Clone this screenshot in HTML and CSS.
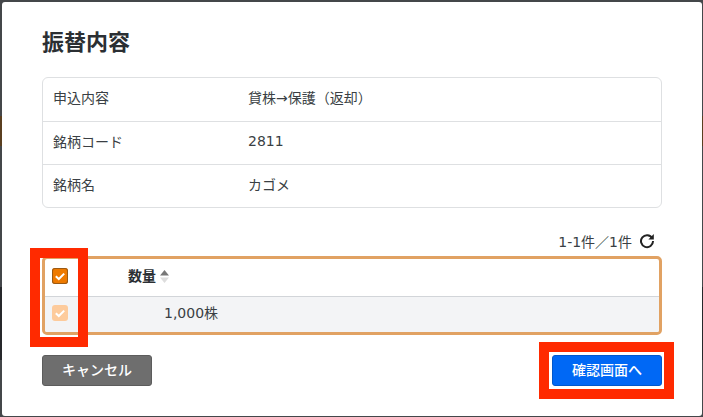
FILE: index.html
```html
<!DOCTYPE html>
<html lang="ja">
<head>
<meta charset="utf-8">
<title>振替内容</title>
<link rel="stylesheet" href="styles.css">
</head>
<body>
<main class="modal">
  <h1 class="title">振替内容</h1>
  <dl class="info">
    <div class="info-row"><dt>申込内容</dt><dd>貸株→保護（返却）</dd></div>
    <div class="info-row"><dt>銘柄コード</dt><dd>2811</dd></div>
    <div class="info-row"><dt>銘柄名</dt><dd>カゴメ</dd></div>
  </dl>
  <div class="pager">
    <span>1-1件／1件</span>
    <svg class="refresh" viewBox="0 0 16 16" width="16" height="16" aria-hidden="true">
      <path d="M13.2 5.2A6 6 0 1 0 14 8" fill="none" stroke="#222" stroke-width="2"/>
      <path d="M14.8 1V6.4H9.4Z" fill="#222"/>
    </svg>
  </div>
  <div class="list">
    <div class="list-row head">
      <span class="check solid"><svg viewBox="0 0 16 16" width="16" height="16"><path d="M3.8 8.2 6.8 11 12.2 5.6" fill="none" stroke="#fff" stroke-width="2"/></svg></span>
      <span class="qty-head">数量<svg class="sort" viewBox="0 0 9 13" width="9" height="13"><path d="M4.5 0 9 5.5H0Z" fill="#777"/><path d="M4.5 13 0 7.5H9Z" fill="#ddd"/></svg></span>
    </div>
    <div class="list-row body">
      <span class="check soft"><svg viewBox="0 0 16 16" width="16" height="16"><path d="M3.8 8.2 6.8 11 12.2 5.6" fill="none" stroke="#fff" stroke-width="2"/></svg></span>
      <span class="qty">1,000株</span>
    </div>
  </div>
  <div class="actions">
    <button class="btn cancel" type="button">キャンセル</button>
    <button class="btn confirm" type="button">確認画面へ</button>
  </div>
</main>
<div class="mark mark-check"></div>
<div class="mark mark-button"></div>
</body>
</html>
```
FILE: styles.css
```css
* { box-sizing: border-box; }
html, body { margin: 0; height: 100%; }
body {
  width: 703px;
  height: 417px;
  overflow: hidden;
  background: linear-gradient(#44474a 116px, #5a3f20 116px, #5a3f20 146px, #44474a 146px, #44474a 287px, #26282b 287px, #26282b 360px, #44474a 360px);
  padding: 2px 1px 1px 2px;
  position: relative;
  font-family: "DejaVu Sans", "Noto Sans CJK JP", sans-serif;
  color: #212529;
}
.modal {
  height: 414px;
  background: #fff;
  border-radius: 3px;
  padding: 27px 40px 0;
}
.title {
  margin: 0;
  height: 28px;
  font-size: 22px;
  line-height: 28px;
  font-weight: 700;
  color: #2b2f33;
}
.info {
  margin: 20px 0 0;
  height: 131px;
  border: 1px solid #dee0e2;
  border-radius: 6px;
  font-size: 14px;
  color: #3a3f44;
}
.info-row {
  display: flex;
  align-items: center;
  height: 43px;
  padding: 0 0 4px 10px;
  border-bottom: 1px solid #dee0e2;
}
.info-row:first-child { height: 44px; padding-bottom: 5px; }
.info-row:last-child { border-bottom: 0; height: 42px; }
.info dt { width: 195px; }
.info dd { margin: 0; }
.pager {
  display: flex;
  justify-content: flex-end;
  align-items: center;
  gap: 7px;
  height: 20px;
  margin-top: 23px;
  padding-right: 7px;
  font-size: 14px;
  color: #3a3f44;
}
.refresh { display: block; }
.list {
  margin-top: 5px;
  height: 79px;
  border: 3px solid #e1a263;
  border-radius: 5px;
  overflow: hidden;
}
.list-row {
  display: flex;
  align-items: center;
  padding-left: 7px;
}
.head { height: 38px; padding-bottom: 3px; border-bottom: 1px solid #d2d5d9; }
.body { height: 35px; padding-bottom: 3px; background: #f3f4f6; }
.check {
  flex: none;
  width: 16px;
  height: 16px;
  border-radius: 3px;
  display: block;
}
.check svg { display: block; }
.solid { background: #ee7a00; box-shadow: inset 0 0 0 1px #9a5a14; }
.soft { background: #fdcb9c; }
.qty-head {
  display: flex;
  align-items: center;
  gap: 4px;
  margin: 0 0 2px 60px;
  font-size: 14px;
  font-weight: 700;
  color: #2b2f33;
}
.sort { margin-top: 3px; }
.qty {
  margin: 0 0 2px 96px;
  font-size: 14px;
  color: #3a3f44;
}
.actions {
  display: flex;
  justify-content: space-between;
  margin-top: 20px;
}
.btn {
  width: 110px;
  height: 31px;
  padding: 0 0 3px;
  border-radius: 3px;
  font: 500 14px "Noto Sans CJK JP", sans-serif;
  color: #fff;
}
.cancel { background: #6e6e6e; border: 1px solid #5c5c5c; }
.confirm { background: #0068f5; border: 1px solid #0058cc; }
.mark {
  position: absolute;
  border: 10px solid #ff2a00;
}
.mark-check { left: 30px; top: 248px; width: 58px; height: 99px; }
.mark-button { left: 539px; top: 342px; width: 135px; height: 57px; }
```
